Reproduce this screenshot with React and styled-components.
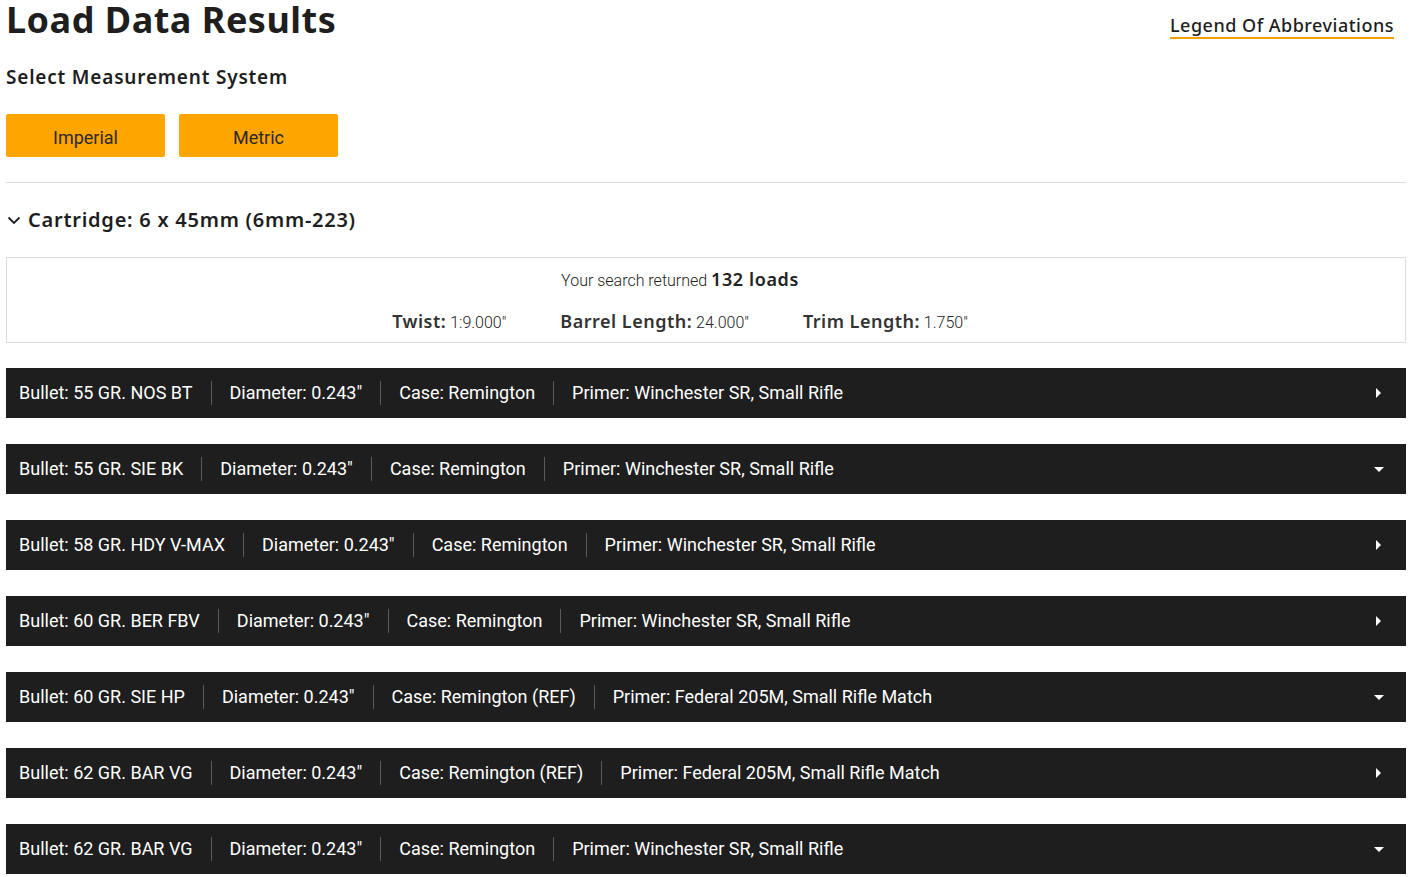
import React from 'react';
import styled, { createGlobalStyle } from 'styled-components';

const GlobalStyle = createGlobalStyle`
  html, body {
    margin: 0;
    padding: 0;
    background: #ffffff;
  }
  body {
    font-family: Roboto, "Liberation Sans", sans-serif;
    color: #222222;
  }
`;

const headFont = `"Noto Sans", "Open Sans", sans-serif`;

const Page = styled.div`
  padding: 0 8px 0 6px;
`;

const TopBar = styled.div`
  display: flex;
  justify-content: space-between;
  align-items: flex-start;
`;

const Title = styled.h1`
  margin: 0;
  font-family: ${headFont};
  font-weight: 700;
  font-size: 36px;
  line-height: 40px;
  color: #1e1e1e;
  letter-spacing: 0.5px;
`;

const LegendLink = styled.a`
  margin: 13px 12px 0 0;
  font-family: ${headFont};
  font-weight: 500;
  font-size: 18px;
  line-height: 24px;
  letter-spacing: 0.5px;
  color: #1e1e1e;
  text-decoration: none;
  border-bottom: 2px solid #f5a000;
`;

const SubTitle = styled.h3`
  margin: 24px 0 0;
  font-family: ${headFont};
  font-weight: 600;
  font-size: 19px;
  line-height: 26px;
  letter-spacing: 0.8px;
  color: #1e1e1e;
`;

const ButtonRow = styled.div`
  display: flex;
  gap: 14px;
  margin-top: 24px;
`;

const UnitButton = styled.button`
  width: 159px;
  height: 43px;
  border: none;
  border-radius: 2px;
  background: #ffa500;
  color: #2a2a2a;
  font-family: Roboto, sans-serif;
  font-size: 18px;
  padding-top: 4px;
  cursor: pointer;
`;

const Divider = styled.hr`
  margin: 25px 0 0;
  border: none;
  border-top: 1px solid #dedede;
`;

const CartridgeTitle = styled.div`
  display: flex;
  align-items: center;
  gap: 6px;
  margin-top: 23px;
  font-family: ${headFont};
  font-weight: 600;
  font-size: 20px;
  line-height: 28px;
  letter-spacing: 0.75px;
  color: #1e1e1e;
`;

const Summary = styled.div`
  margin-top: 23px;
  border: 1px solid #dddddd;
  padding: 9px 52px 7px 0;
  text-align: center;
`;

const Returned = styled.div`
  font-family: Roboto, sans-serif;
  font-weight: 300;
  font-size: 16px;
  line-height: 24px;
  color: #222;
  b {
    font-family: ${headFont};
    font-weight: 600;
    font-size: 18px;
    letter-spacing: 0.6px;
  }
`;

const Specs = styled.div`
  display: flex;
  justify-content: center;
  gap: 54px;
  margin-top: 16px;
`;

const Spec = styled.div`
  font-family: Roboto, sans-serif;
  font-weight: 300;
  font-size: 16px;
  line-height: 24px;
  color: #222;
  b {
    font-family: ${headFont};
    font-weight: 600;
    font-size: 18px;
    letter-spacing: 0.5px;
    color: #333;
  }
`;

const Rows = styled.div`
  display: flex;
  flex-direction: column;
  gap: 26px;
  margin-top: 25px;
`;

const Row = styled.div`
  display: flex;
  align-items: center;
  height: 50px;
  background: #1e1e1e;
  color: #ffffff;
  padding: 0 13px;
`;

const Cell = styled.span`
  font-family: Roboto, sans-serif;
  font-size: 18px;
  padding: 0 18px;
  border-left: 1px solid #5a5a5a;
  line-height: 24px;
  &:first-child {
    padding-left: 0;
    border-left: none;
  }
`;

const Caret = styled.span`
  margin-left: auto;
  width: 0;
  height: 0;
  border-style: solid;
  ${({ $open }) =>
    $open
      ? `border-width: 5px 5px 0 5px; border-color: #fff transparent transparent transparent; margin-right: 9px;`
      : `border-width: 5px 0 5px 5px; border-color: transparent transparent transparent #fff; margin-right: 12px;`}
`;

const loads = [
  { bullet: '55 GR. NOS BT', caseName: 'Remington', primer: 'Winchester SR, Small Rifle', open: false },
  { bullet: '55 GR. SIE BK', caseName: 'Remington', primer: 'Winchester SR, Small Rifle', open: true },
  { bullet: '58 GR. HDY V-MAX', caseName: 'Remington', primer: 'Winchester SR, Small Rifle', open: false },
  { bullet: '60 GR. BER FBV', caseName: 'Remington', primer: 'Winchester SR, Small Rifle', open: false },
  { bullet: '60 GR. SIE HP', caseName: 'Remington (REF)', primer: 'Federal 205M, Small Rifle Match', open: true },
  { bullet: '62 GR. BAR VG', caseName: 'Remington (REF)', primer: 'Federal 205M, Small Rifle Match', open: false },
  { bullet: '62 GR. BAR VG', caseName: 'Remington', primer: 'Winchester SR, Small Rifle', open: true },
];

const App = () => (
  <>
    <GlobalStyle />
    <Page>
      <TopBar>
        <Title>Load Data Results</Title>
        <LegendLink href="#">Legend Of Abbreviations</LegendLink>
      </TopBar>
      <SubTitle>Select Measurement System</SubTitle>
      <ButtonRow>
        <UnitButton>Imperial</UnitButton>
        <UnitButton>Metric</UnitButton>
      </ButtonRow>
      <Divider />
      <CartridgeTitle>
        <svg width="16" height="16" viewBox="0 0 16 16" fill="none">
          <path d="M2.5 5.5 L8 11 L13.5 5.5" stroke="#1e1e1e" strokeWidth="1.8" />
        </svg>
        Cartridge: 6 x 45mm (6mm-223)
      </CartridgeTitle>
      <Summary>
        <Returned>
          Your search returned <b>132 loads</b>
        </Returned>
        <Specs>
          <Spec>
            <b>Twist:</b> 1:9.000"
          </Spec>
          <Spec>
            <b>Barrel Length:</b> 24.000"
          </Spec>
          <Spec>
            <b>Trim Length:</b> 1.750"
          </Spec>
        </Specs>
      </Summary>
      <Rows>
        {loads.map((l, i) => (
          <Row key={i}>
            <Cell>Bullet: {l.bullet}</Cell>
            <Cell>Diameter: 0.243"</Cell>
            <Cell>Case: {l.caseName}</Cell>
            <Cell>Primer: {l.primer}</Cell>
            <Caret $open={l.open} />
          </Row>
        ))}
      </Rows>
    </Page>
  </>
);

export default App;
